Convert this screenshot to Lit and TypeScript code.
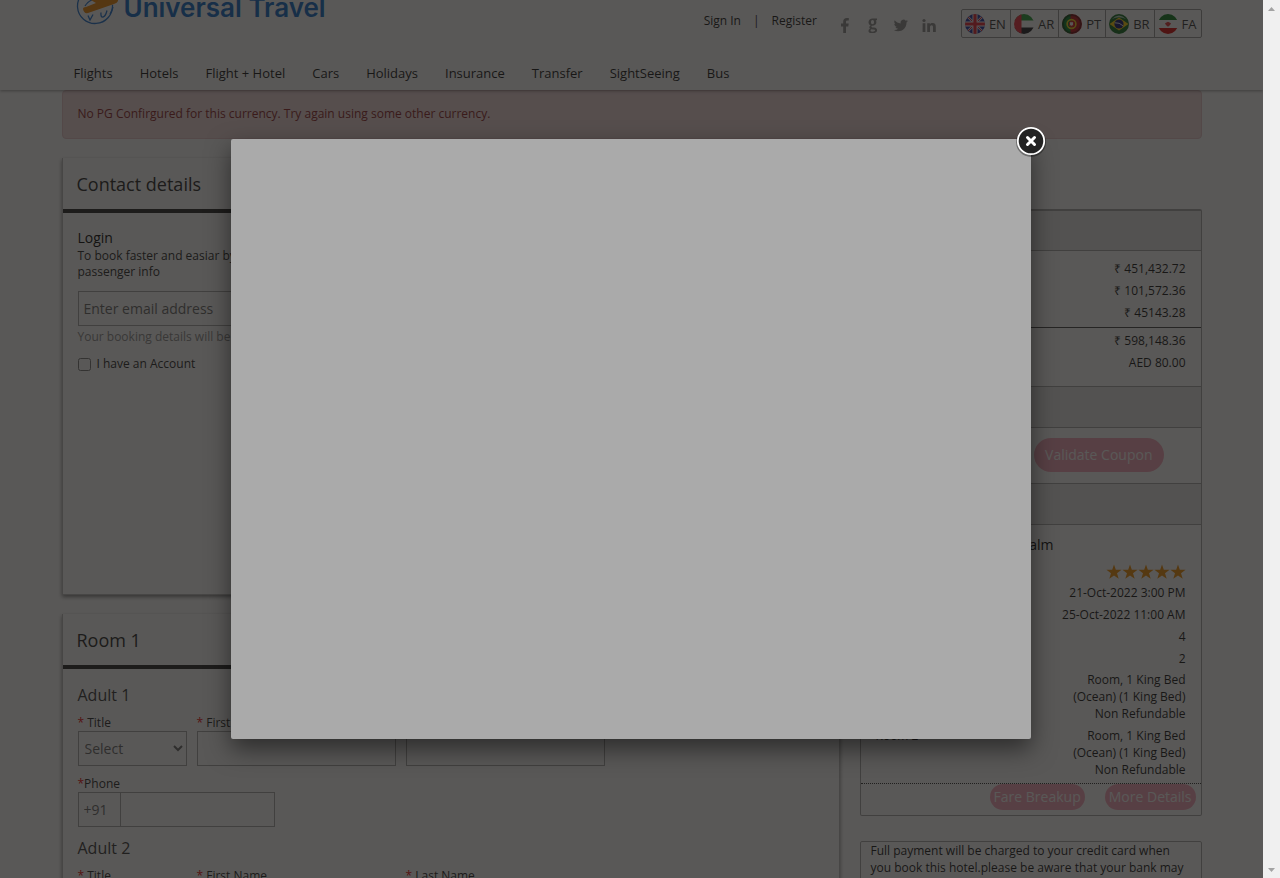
import { LitElement, html, css, svg } from "lit";
import { customElement, property } from "lit/decorators.js";

const NAV = ["Flights", "Hotels", "Flight + Hotel", "Cars", "Holidays", "Insurance", "Transfer", "SightSeeing", "Bus"];

const flags: Record<string, unknown> = {
  EN: svg`<rect width="20" height="20" fill="#1c2a9c"/><path d="M0 0L20 20M20 0L0 20" stroke="#d5d5e8" stroke-width="2.400"/><path d="M0 0L20 20M20 0L0 20" stroke="#e0202f" stroke-width="1"/><path d="M10 0V20M0 10H20" stroke="#fff" stroke-width="5"/><path d="M10 0V20M0 10H20" stroke="#e8202f" stroke-width="3.2"/>`,
  AR: svg`<rect width="20" height="7" fill="#1f9a30"/><rect y="6.5" width="20" height="7" fill="#fff"/><rect y="13.500" width="20" height="7" fill="#1c1c22"/><rect width="7.500" height="20" fill="#f02838"/>`,
  PT: svg`<rect width="20" height="20" fill="#b80c14"/><rect width="8.500" height="20" fill="#007a22"/><circle cx="9.500" cy="10" r="4.400" fill="none" stroke="#f0d010" stroke-width="1.600"/><circle cx="9.500" cy="10" r="2.800" fill="#e82222"/><path d="M8 8.300h3v2.400q-1.500 2-3 0z" fill="#fff"/><circle cx="10" cy="10" r="9" fill="none" stroke="#000" stroke-opacity=".4" stroke-width="2"/>`,
  BR: svg`<rect width="20" height="20" fill="#0c6a1c"/><path d="M0.500 10L10 3.500L19.500 10L10 16.500z" fill="#ffd000"/><circle cx="10" cy="10" r="4.600" fill="#10126a"/><path d="M5.800 8.800q4.500-.5 8.300 3" stroke="#fff" stroke-width=".9" fill="none"/><path d="M3 5Q10-2 17 5Q10 1.500 3 5z" fill="#fff" fill-opacity=".7"/>`,
  FA: svg`<rect width="20" height="20" fill="#fff"/><rect width="20" height="6" fill="#087a1c"/><rect y="14" width="20" height="6" fill="#d80404"/><path d="M7 9.200q1.500-.4 3-1.400q1.500 1 3 1.400q-.6 2.300-3 3.500q-2.400-1.200-3-3.500z" fill="#e02c30"/>`,
};

const social = [
  { name: "Facebook", shape: svg`<path d="M6.200 16V9.400H4V6.600h2.200V4.700C6.200 2.300 7.600 1 9.800 1c1 0 1.800.1 2 .1v2.500h-1.400c-1.100 0-1.400.6-1.400 1.400v1.600h2.700l-.4 2.800H9V16z"/>` },
  { name: "Google", shape: svg`<path fill-rule="evenodd" d="M12 1.500v1.700h-1.300c.5.600.7 1.200.7 2 0 2.200-1.700 3.500-4.200 3.500-.4 0-.8.500-.8.900 0 .5.400.7 1 .8l1.700.2c2 .3 3 1.200 3 2.600 0 1.800-1.900 3.100-4.700 3.100-2.400 0-3.900-.9-3.900-2.400 0-1 .6-1.700 1.700-2.100-.6-.3-.9-.8-.9-1.400 0-.9.500-1.500 1.300-2C4.400 7.900 3.500 6.900 3.500 5.300c0-2.300 1.800-3.800 4.200-3.800zM7.500 3C6.600 3 6 3.900 6 5.200c0 1.200.5 2 1.500 2S9 6.400 9 5.200C9 3.800 8.500 3 7.500 3zM6.400 12.200c-.6.300-.9.800-.9 1.300 0 .8.700 1.200 2.100 1.200s2.400-.5 2.400-1.200c0-.6-.5-.9-1.500-1z"/>` },
  { name: "Twitter", shape: svg`<path d="M15 4.100c-.5.200-1.100.4-1.700.5.600-.4 1-.9 1.300-1.600-.6.300-1.200.6-1.900.7A2.900 2.900 0 0 0 7.700 6.400C5.300 6.300 3.100 5.100 1.700 3.300c-.8 1.300-.4 3 .9 3.900-.5 0-.9-.1-1.300-.4 0 1.400 1 2.700 2.400 3-.4.100-.9.100-1.300 0 .4 1.200 1.500 2 2.700 2A6 6 0 0 1 .8 13c4.800 3.100 12.700.6 12.700-7.400.6-.4 1.100-.9 1.500-1.500z"/>` },
  { name: "LinkedIn", shape: svg`<circle cx="3" cy="3.500" r="1.600"/><path d="M1.600 6.200h2.800V15H1.600zM6.200 6.200h2.700v1.200C9.400 6.500 10.300 6 11.500 6c2.600 0 3.300 1.600 3.300 4v5H12v-4.500c0-1.200-.2-2.200-1.400-2.200-1.300 0-1.600 1-1.600 2.200V15H6.200z"/>` },
];

const base = css`
  * { box-sizing: border-box; }
  .req { color: #e00; }
  button, input, select { font-family: inherit; margin: 0; }
  .text, .select { height: 35px; border: 1px solid #a8a8a8; border-radius: 0; background: transparent; font-size: 14px; color: #666; padding: 0 5px; outline: none; }
  .text::placeholder { color: #666; opacity: 1; }
`;

@customElement("site-header")
class SiteHeader extends LitElement {
  static styles = [base, css`
    :host { display: block; background: #fff; box-shadow: 0 1px 3px rgba(0, 0, 0, .4); position: relative; font-size: 13px; }
    .inner { max-width: 1140px; margin: 0 auto; height: 90px; display: flex; flex-direction: column; justify-content: space-between; }
    .top { display: flex; align-items: flex-start; }
    .logo { display: flex; align-items: flex-end; gap: 6px; height: 26px; margin-left: 14px; margin-right: auto; text-decoration: none; overflow: hidden; }
    .brand { font-family: Inter, sans-serif; font-weight: 600; font-size: 26px; line-height: 36px; color: #0c68c8; white-space: nowrap; }
    .mark { flex: none; }
    .links { display: flex; gap: 12px; font-size: 12px; line-height: 20px; margin-top: 11px; margin-right: 20px; }
    .links a, .nav a { color: #111; text-decoration: none; }
    .social { display: flex; gap: 12px; margin: 17px 24px 0 0; }
    .social a { display: block; height: 16px; fill: #8c8c8c; }
    .langs { display: flex; list-style: none; margin: 9px 0 0; padding: 0; border: 1px solid #999; border-radius: 2px; }
    .langs li + li { border-left: 1px solid #999; }
    .langs a { display: flex; align-items: center; gap: 4px; height: 27px; padding: 0 4px 0 3px; color: #333; text-decoration: none; }
    .flag { border-radius: 50%; }
    .nav { display: flex; gap: 27px; padding-left: 12px; line-height: 34px; }
  `];
  render() {
    return html`<div class="inner">
      <div class="top">
        <a class="logo" href="#" aria-label="Universal Travel">
          <svg class="mark" width="42" height="42" viewBox="0 0 42 42">
            <circle cx="19" cy="22" r="17.500" fill="none" stroke="#1c70d0" stroke-width="1.300" stroke-dasharray="76 34" transform="rotate(-4 19 22)"/>
            <path d="M9 22q2-4 7-6M12 31.500l2 4.500 3-5.500M25 28.500q-.5 5 2 4.500t4-6.500M37 23q-1 4-3 7" fill="none" stroke="#1c70d0" stroke-width="1.300"/>
            <path d="M7 25q0-2 3-2l10-4L8 12l5-1 15 5 8-3q5-1 6 2t-4 5L12 29q-4 1-5-4z" fill="#f08400"/>
          </svg>
          <span class="brand">Universal Travel</span>
        </a>
        <div class="links"><a href="#">Sign In</a><span>|</span><a href="#">Register</a></div>
        <div class="social">${social.map(s => html`<a href="#" aria-label=${s.name}><svg width="16" height="16" viewBox="0 0 16 16">${s.shape}</svg></a>`)}</div>
        <ul class="langs">${Object.keys(flags).map(k => html`<li><a href="#"><svg class="flag" width="20" height="20" viewBox="0 0 20 20">${flags[k]}</svg>${k}</a></li>`)}</ul>
      </div>
      <nav class="nav">${NAV.map(n => html`<a href="#">${n}</a>`)}</nav>
    </div>`;
  }
}

@customElement("traveller-fields")
class TravellerFields extends LitElement {
  @property({ type: Number }) number = 1;
  static styles = [base, css`
    :host { display: block; }
    h3 { font-size: 16px; font-weight: 400; line-height: 22px; margin: 0 0 8px; color: #333; }
    .row { display: flex; gap: 10px; margin-bottom: 9px; }
    .field { display: flex; flex-direction: column; }
    label { line-height: 17px; font-size: 12px; color: #222; }
    .title { width: 109px; }
    .name { width: 199px; }
    .select { padding: 0 2px; }
    .phone { display: flex; }
    .code { width: 43px; }
    .num { width: 154px; border-left: 0; }
  `];
  render() {
    return html`
      <h3>Adult ${this.number}</h3>
      <div class="row">
        <div class="field title"><label for="title"><span class="req">*</span> Title</label><select class="select" id="title"><option>Select</option><option>Mr</option><option>Mrs</option></select></div>
        <div class="field name"><label for="first"><span class="req">*</span> First Name</label><input class="text" id="first"></div>
        <div class="field name"><label for="last"><span class="req">*</span> Last Name</label><input class="text" id="last"></div>
      </div>
      <div class="field"><label for="phone"><span class="req">*</span>Phone</label>
        <div class="phone"><input class="text code" aria-label="Country code" value="+91"><input class="text num" id="phone" type="tel"></div>
      </div>`;
  }
}

@customElement("booking-summary")
class BookingSummary extends LitElement {
  static styles = [base, css`
    :host { display: block; font-size: 12px; color: #111; }
    .panel { border: 1px solid #a8a8a8; border-radius: 2px; }
    .main { border-top-width: 2px; margin-bottom: 25px; }
    .head { background: #e8e8e8; height: 40px; border-bottom: 1px solid #a8a8a8; margin: 0; font-size: 14px; font-weight: 400; line-height: 39px; padding: 0 15px; }
    .head.next { height: 42px; border-top: 1px solid #a8a8a8; }
    dl { margin: 0; }
    .line { display: flex; justify-content: space-between; line-height: 22px; padding: 0 15px; }
    .line dd { margin: 0; text-align: right; }
    .prices { padding: 7px 0 12px; }
    .total { border-top: 1px solid #444; margin-top: 3px; padding-top: 2px; }
    .coupon { display: flex; justify-content: flex-end; gap: 10px; padding: 10px 37px 11px 15px; }
    .coupon .text { flex: 1; min-width: 0; height: 34px; }
    .pill { border: 0; border-radius: 17px; background: #f8a4b8; color: #fff; font-size: 14px; white-space: nowrap; }
    .validate { height: 34px; padding: 0 11px 1px; }
    .small { height: 26px; padding: 0 4px 1px; }
    .hotel { font-size: 14px; font-weight: 400; line-height: 20px; margin: 0; padding: 10px 147px 9px 15px; text-align: right; color: #000; }
    .stars { display: flex; justify-content: flex-end; padding: 0 15px 2px; fill: #f08c00; }
    .rooms { padding-top: 1px; }
    .room { line-height: 17px; padding-bottom: 5px; }
    .actions { display: flex; justify-content: flex-end; gap: 20px; border-top: 1px dotted #333; padding: 0 5px 5px; }
    .note { padding: 0 10px; line-height: 17px; margin: 0; }
  `];
  row(label: string, value: string, extra = "") {
    return html`<div class="line ${extra}"><dt>${label}</dt><dd>${value}</dd></div>`;
  }
  room(label: string) {
    return html`<div class="line room"><dt>${label}</dt><dd>Room, 1 King Bed<br>(Ocean) (1 King Bed)<br>Non Refundable</dd></div>`;
  }
  render() {
    return html`
      <section class="panel main">
        <h2 class="head">Fare Details</h2>
        <dl class="prices">
          ${this.row("Base Fare", "₹ 451,432.72")}
          ${this.row("Taxes", "₹ 101,572.36")}
          ${this.row("Fees", "₹ 45143.28")}
          ${this.row("Total", "₹ 598,148.36", "total")}
          ${this.row("Payable", "AED 80.00")}
        </dl>
        <h2 class="head next">Coupon</h2>
        <div class="coupon"><input class="text" aria-label="Coupon code"><button class="pill validate">Validate Coupon</button></div>
        <h2 class="head next">Hotel Details</h2>
        <h3 class="hotel">Atlantis The Palm</h3>
        <div class="stars" role="img" aria-label="5 stars">${[1, 2, 3, 4, 5].map(() => html`<svg width="16" height="16" viewBox="0 0 16 16"><path d="M8 .5l1.800 5.300h5.800l-4.600 3.500 1.700 5.500L8 11.400l-4.700 3.400L5 9.300.4 5.800h5.800z"/></svg>`)}</div>
        <dl>
          ${this.row("Check In", "21-Oct-2022 3:00 PM")}
          ${this.row("Check Out", "25-Oct-2022 11:00 AM")}
          ${this.row("Nights", "4")}
          ${this.row("Rooms", "2")}
        </dl>
        <dl class="rooms">
          ${this.room("Room 1")}
          ${this.room("Room 2")}
        </dl>
        <div class="actions"><button class="pill small">Fare Breakup</button><button class="pill small">More Details</button></div>
      </section>
      <section class="panel"><p class="note">Full payment will be charged to your credit card when you book this hotel.please be aware that your bank may charge a fee.</p></section>`;
  }
}

@customElement("app-root")
class AppRoot extends LitElement {
  static styles = [base, css`
    :host { display: grid; grid-template-columns: 1fr 17px; height: 100vh; overflow: hidden; font-family: "Open Sans", sans-serif; font-size: 12px; color: #222; }
    .page { position: relative; overflow: hidden; background: #fff; min-width: 0; }
    .wrap { max-width: 1140px; margin: 0 auto; }
    .alert { height: 49px; line-height: 46px; padding: 0 15px; border: 1px solid #e8c4c8; border-radius: 4px; background: #f2d8da; color: #8c2022; }
    .cols { display: grid; grid-template-columns: 1fr 342px; gap: 20px; align-items: start; padding-top: 19px; }
    .summary { margin-top: 51px; }
    .card { border: 1px solid #bbb; border-top: 0; box-shadow: 0 2px 4px rgba(0, 0, 0, .5); margin-bottom: 19px; }
    .contact { min-height: 437px; }
    .card h2 { font-size: 18px; font-weight: 400; line-height: 50px; margin: 0; padding: 1px 14px 0; border-bottom: 4px solid #222; }
    .body { padding: 15px; }
    .login { font-size: 14px; font-weight: 400; line-height: 20px; margin: 0; color: #000; }
    .intro { width: 260px; line-height: 16px; margin: 0 0 11px; }
    .email { display: block; width: 300px; }
    .help { line-height: 22px; margin: 0; color: #888; }
    .check { display: flex; align-items: center; gap: 6px; line-height: 20px; margin-top: 6px; }
    .check input { width: 13px; height: 13px; }
    traveller-fields { margin-bottom: 10px; }
    .overlay { position: absolute; inset: 0; display: flex; align-items: center; justify-content: center; padding-right: 1px; background: rgba(28, 26, 24, .73); }
    .dialog { position: relative; width: 800px; height: 600px; max-width: 90%; background: #aaa; border-radius: 2px; box-shadow: 0 10px 25px rgba(0, 0, 0, .5); }
    .close { position: absolute; top: -16px; right: -18px; width: 36px; height: 36px; padding: 0; border: 0; background: none; }
    .scroll { background: #f0f0f0; display: flex; flex-direction: column; justify-content: space-between; align-items: center; padding: 4px 0; fill: #a3a3a3; }
  `];
  render() {
    return html`
      <div class="page">
        <site-header></site-header>
        <main class="wrap">
          <div class="alert" role="alert">No PG Confirgured for this currency. Try again using some other currency.</div>
          <div class="cols">
            <div>
              <section class="card contact">
                <h2>Contact details</h2>
                <div class="body">
                  <h3 class="login">Login</h3>
                  <p class="intro">To book faster and easiar by using saved passenger info</p>
                  <input class="text email" type="email" aria-label="Email" placeholder="Enter email address">
                  <p class="help">Your booking details will be sent to this email address</p>
                  <label class="check"><input type="checkbox">I have an Account</label>
                </div>
              </section>
              <section class="card">
                <h2>Room 1</h2>
                <div class="body">
                  <traveller-fields .number=${1}></traveller-fields>
                  <traveller-fields .number=${2}></traveller-fields>
                </div>
              </section>
            </div>
            <booking-summary class="summary"></booking-summary>
          </div>
        </main>
        <div class="overlay">
          <div class="dialog" role="dialog" aria-label="Message">
            <button class="close" aria-label="Close">
              <svg width="36" height="36" viewBox="0 0 36 36">
                <circle cx="18" cy="19" r="15" fill="#000" opacity=".35"/>
                <circle cx="18" cy="18" r="13.200" fill="#222" stroke="#fff" stroke-width="1.800"/>
                <path d="M14.500 14.500l7 7M21.500 14.500l-7 7" stroke="#fff" stroke-width="3" stroke-linecap="round"/>
              </svg>
            </button>
          </div>
        </div>
      </div>
      <div class="scroll" aria-hidden="true">
        <svg width="9" height="9" viewBox="0 0 9 9"><path d="M1 7L4.500 3L8 7z"/></svg>
        <svg width="9" height="9" viewBox="0 0 9 9"><path d="M1 3L4.500 7L8 3z"/></svg>
      </div>`;
  }
}
